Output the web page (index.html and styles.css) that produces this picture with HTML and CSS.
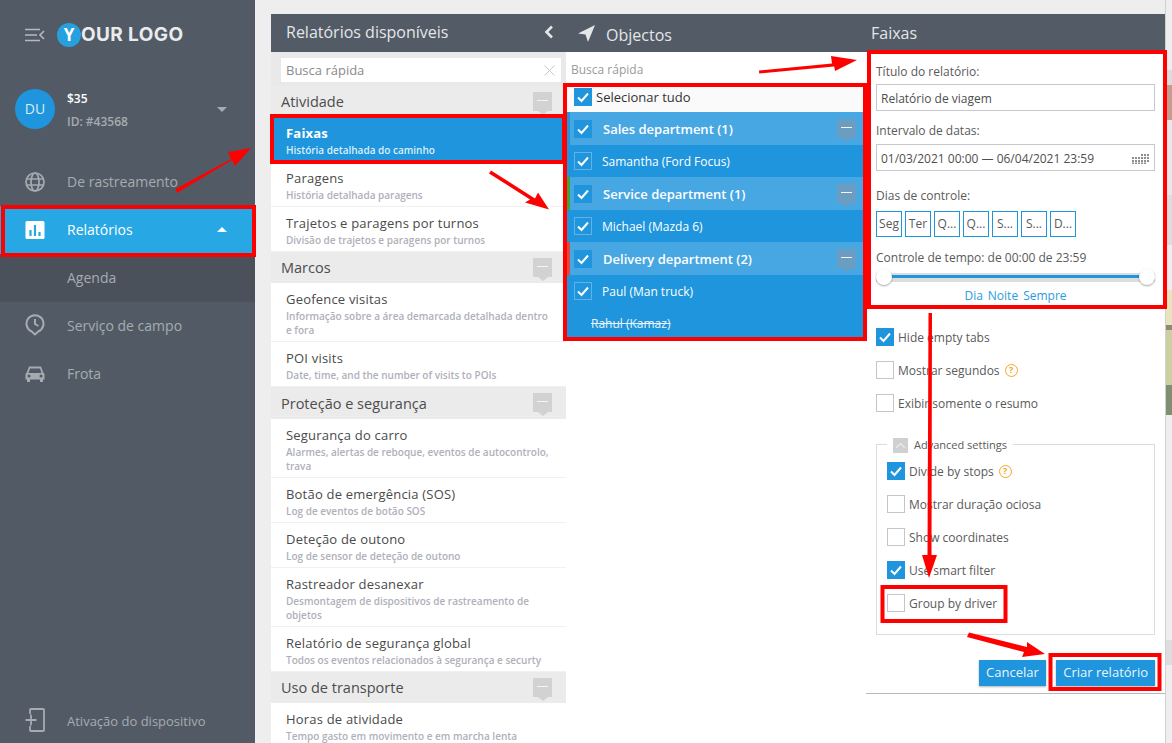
FILE: index.html
```html
<!DOCTYPE html>
<html lang="pt">
<head>
<meta charset="utf-8">
<title>Relatórios</title>
<link rel="stylesheet" href="styles.css">
</head>
<body>
<svg class="defs" width="0" height="0" aria-hidden="true">
  <defs>
    <symbol id="tick" viewBox="0 0 18 18"><path d="M4 9.500l3.500 3.500L14 5.500" fill="none" stroke="#fff" stroke-width="2"/></symbol>
  </defs>
</svg>
<div class="app">
  <aside class="sidebar">
    <div class="brand">
      <svg class="brand-toggle" width="20" height="14" viewBox="0 0 20 14"><path d="M0 1.500h15M0 7h12M0 12.500h15M19 3l-4 4 4 4" fill="none" stroke="#b5bac0" stroke-width="1.600"/></svg>
      <div class="logo"><span class="logo-mark">Y</span><span class="logo-text">OUR LOGO</span></div>
    </div>
    <div class="user">
      <div class="avatar">DU</div>
      <div class="user-info">
        <div class="balance">$35</div>
        <div class="user-id">ID: #43568</div>
      </div>
      <span class="caret-down"></span>
    </div>
    <nav class="menu">
      <a class="menu-item">
        <svg class="menu-icon" viewBox="0 0 20 20"><g fill="none" stroke="#a6abb1" stroke-width="1.700"><circle cx="10" cy="10" r="9"/><ellipse cx="10" cy="10" rx="4" ry="9"/><path d="M1.500 7h17M1.500 13h17"/></g></svg>
        <span class="menu-label">De rastreamento</span>
      </a>
      <a class="menu-item is-active">
        <svg class="menu-icon" viewBox="0 0 20 20"><rect x="0.500" y="1" width="19" height="18" rx="1.500" fill="#fff"/><path d="M5.500 10v6M10 5v11M14.500 12v4" stroke="#27a8e4" stroke-width="2.200"/></svg>
        <span class="menu-label">Relatórios</span>
        <span class="caret-up"></span>
      </a>
      <a class="menu-sub">Agenda</a>
      <a class="menu-item">
        <svg class="menu-icon menu-icon-tall" viewBox="0 0 20 22"><g fill="none" stroke="#a6abb1" stroke-width="2"><path d="M10 20.500l-3.200-3A8.500 8.500 0 1 1 13.200 17.500z"/><path d="M10 5v5l3.500 2"/></g></svg>
        <span class="menu-label">Serviço de campo</span>
      </a>
      <a class="menu-item">
        <svg class="menu-icon" viewBox="0 0 20 18"><path d="M4 1.500h12l2.500 6.500a1.500 1.500 0 0 1 1 1.500v5h-1.500V17h-3v-2.500H5V17H2v-2.500H.5v-5A1.500 1.500 0 0 1 1.500 8z" fill="#a6abb1"/><path d="M5 3.500h10l1.500 4.500h-13z" fill="#525b65"/><circle cx="4" cy="11" r="1.500" fill="#525b65"/><circle cx="16" cy="11" r="1.500" fill="#525b65"/></svg>
        <span class="menu-label">Frota</span>
      </a>
    </nav>
    <a class="device-link">
      <svg class="menu-icon" viewBox="0 0 20 24"><path d="M5 6V2a1 1 0 0 1 1-1h12a1 1 0 0 1 1 1v20a1 1 0 0 1-1 1H6a1 1 0 0 1-1-1v-4M0.500 12h11M6 6.500v11" fill="none" stroke="#a6abb1" stroke-width="1.800"/></svg>
      <span>Ativação do dispositivo</span>
    </a>
  </aside>

  <main class="workspace">
    <section class="col col-reports">
      <header class="col-head head-reports">
        <h2>Relatórios disponíveis</h2>
        <svg width="10" height="14" viewBox="0 0 10 14"><path d="M8 1.500L2.500 7 8 12.500" fill="none" stroke="#e4e6e8" stroke-width="2.600"/></svg>
      </header>
      <div class="search-bar">
        <div class="search-field"><span>Busca rápida</span>
          <svg width="11" height="11" viewBox="0 0 11 11"><path d="M.5.5l10 10M10.500.5l-10 10" stroke="#c9c9c9" stroke-width="1"/></svg>
        </div>
      </div>

      <div class="section"><span>Atividade</span><i class="fold"></i></div>
      <div class="item is-selected"><b>Faixas</b><small>História detalhada do caminho</small></div>
      <div class="item"><b>Paragens</b><small>História detalhada paragens</small></div>
      <div class="item"><b>Trajetos e paragens por turnos</b><small>Divisão de trajetos e paragens por turnos</small></div>

      <div class="section"><span>Marcos</span><i class="fold"></i></div>
      <div class="item"><b>Geofence visitas</b><small>Informação sobre a área demarcada detalhada dentro e fora</small></div>
      <div class="item"><b>POI visits</b><small>Date, time, and the number of visits to POIs</small></div>

      <div class="section section-tall"><span>Proteção e segurança</span><i class="fold"></i></div>
      <div class="item"><b>Segurança do carro</b><small>Alarmes, alertas de reboque, eventos de autocontrolo, trava</small></div>
      <div class="item"><b>Botão de emergência (SOS)</b><small>Log de eventos de botão SOS</small></div>
      <div class="item"><b>Deteção de outono</b><small>Log de sensor de deteção de outono</small></div>
      <div class="item"><b>Rastreador desanexar</b><small>Desmontagem de dispositivos de rastreamento de objetos</small></div>
      <div class="item"><b>Relatório de segurança global</b><small>Todos os eventos relacionados à segurança e securty</small></div>

      <div class="section"><span>Uso de transporte</span><i class="fold"></i></div>
      <div class="item"><b>Horas de atividade</b><small>Tempo gasto em movimento e em marcha lenta</small></div>
    </section>

    <section class="col col-objects">
      <header class="col-head head-objects">
        <svg width="19" height="19" viewBox="0 0 19 19"><path d="M18 1L1 9.500l7.500 1L11 18z" fill="#e4e6e8"/></svg>
        <h2>Objectos</h2>
      </header>
      <div class="object-search">Busca rápida</div>
      <div class="tree">
        <div class="select-all"><span class="check is-on"><svg><use href="#tick"/></svg></span><span>Selecionar tudo</span></div>
        <div class="group mark-blue"><span class="check is-on"><svg><use href="#tick"/></svg></span><b>Sales department (1)</b><i class="fold fold-dark"></i></div>
        <div class="unit"><span class="check is-ghost"><svg><use href="#tick"/></svg></span><span>Samantha (Ford Focus)</span></div>
        <div class="group mark-green"><span class="check is-on"><svg><use href="#tick"/></svg></span><b>Service department (1)</b><i class="fold fold-dark"></i></div>
        <div class="unit"><span class="check is-ghost"><svg><use href="#tick"/></svg></span><span>Michael (Mazda 6)</span></div>
        <div class="group mark-red"><span class="check is-on"><svg><use href="#tick"/></svg></span><b>Delivery department (2)</b><i class="fold fold-dark"></i></div>
        <div class="unit"><span class="check is-ghost"><svg><use href="#tick"/></svg></span><span>Paul (Man truck)</span></div>
        <div class="unit unit-off"><s>Rahul (Kamaz)</s></div>
      </div>
    </section>

    <section class="col col-form">
      <header class="col-head head-form"><h2>Faixas</h2></header>
      <div class="form">
        <label class="label label-first">Título do relatório:</label>
        <div class="input">Relatório de viagem</div>
        <label class="label label-date">Intervalo de datas:</label>
        <div class="input">01/03/2021 00:00 — 06/04/2021 23:59
          <svg width="18" height="11" viewBox="0 0 18 11"><g fill="#8e8e8e"><path d="M0 4h2v2H0zM0 7h2v2H0zM0 9.500h2v1.500H0zM3 4h2v2H3zM3 7h2v2H3zM3 9.500h2v1.500H3zM6 4h2v2H6zM6 7h2v2H6zM6 9.500h2v1.500H6zM9 1h2v2H9zM9 4h2v2H9zM9 7h2v2H9zM9 9.500h2v1.500H9zM12 1h2v2h-2zM12 4h2v2h-2zM12 7h2v2h-2zM12 9.500h2v1.500h-2zM15 1h2v2h-2zM15 4h2v2h-2zM15 7h2v2h-2z"/></g></svg>
        </div>
        <label class="label label-days">Dias de controle:</label>
        <div class="days">
          <span class="day">Seg</span><span class="day">Ter</span><span class="day">Q...</span><span class="day">Q...</span><span class="day">S...</span><span class="day">S...</span><span class="day">D...</span>
        </div>
        <label class="label label-time">Controle de tempo: de 00:00 de 23:59</label>
        <div class="slider"><span class="knob"></span><span class="knob"></span></div>
        <div class="presets"><a>Dia</a><a>Noite</a><a>Sempre</a></div>

        <div class="options">
          <div class="option"><span class="check is-on"><svg><use href="#tick"/></svg></span><span>Hide empty tabs</span></div>
          <div class="option"><span class="check"></span><span>Mostrar segundos</span><i class="help">?</i></div>
          <div class="option"><span class="check"></span><span>Exibir somente o resumo</span></div>
        </div>

        <div class="advanced">
          <div class="legend">
            <span class="legend-toggle"><svg width="11" height="7" viewBox="0 0 11 7"><path d="M1 6l4.500-4.500L10 6" fill="none" stroke="#e8e8e8" stroke-width="1.500"/></svg></span>
            <span class="legend-text">Advanced settings</span>
          </div>
          <div class="option"><span class="check is-on"><svg><use href="#tick"/></svg></span><span>Divide by stops</span><i class="help">?</i></div>
          <div class="option"><span class="check"></span><span>Mostrar duração ociosa</span></div>
          <div class="option"><span class="check"></span><span>Show coordinates</span></div>
          <div class="option"><span class="check is-on"><svg><use href="#tick"/></svg></span><span>Use smart filter</span></div>
          <div class="option"><span class="check"></span><span>Group by driver</span></div>
        </div>

        <div class="actions">
          <button class="btn btn-cancel">Cancelar</button>
          <button class="btn">Criar relatório</button>
        </div>
      </div>
      <div class="form-rule"></div>
    </section>
    <div class="map-strip"></div>
  </main>
</div>

<svg class="annotations" width="1172" height="743" viewBox="0 0 1172 743" aria-hidden="true">
  <g fill="none" stroke="#f00" stroke-width="4">
    <rect x="3" y="207" width="251" height="48"/>
    <rect x="272" y="116" width="292" height="46"/>
    <rect x="565" y="85" width="300" height="254"/>
    <rect x="869" y="52" width="296" height="255"/>
    <rect x="882.500" y="587" width="123" height="34"/>
    <rect x="1050.500" y="655" width="109" height="34"/>
  </g>
  <g fill="#f00">
    <path d="M175.500 189l55.500-30-3-7 23-4-16 18-3-6-55 33z"/>
    <path d="M491 170.500l44 28 3-6 11 17-24-7 5-3-41-26z"/>
    <path d="M759 70.500l73-7-1-7.500 26 4-22 11-.8-4.500-75 7z"/>
    <path d="M928.500 313h3.500l-.5 242 5.500 0-8 23-7-23 5.500 0z"/>
    <path d="M969 632.500l58 14.500 0-5 18 12-23 3 2-5-57-15z"/>
  </g>
</svg>
</body>
</html>
```
FILE: styles.css
```css
* { box-sizing: border-box; }
html, body { margin: 0; height: 100%; }
body {
  position: relative;
  width: 1172px;
  height: 743px;
  overflow: hidden;
  font-family: "Open Sans", "Noto Sans", "Liberation Sans", sans-serif;
  background: #eeeeee;
  color: #4a4a4a;
}
.defs { position: absolute; }
.annotations { position: absolute; left: 0; top: 0; pointer-events: none; }
.app { display: flex; height: 743px; }

/* Sidebar */
.sidebar {
  width: 255px;
  flex: none;
  display: flex;
  flex-direction: column;
  background: #525b65;
  color: #a6abb1;
  font-size: 14px;
}
.brand { display: flex; align-items: center; height: 69px; padding-left: 25px; }
.brand-toggle { margin-right: 12px; }
.logo { display: flex; align-items: center; }
.logo-mark {
  width: 24px; height: 24px; border-radius: 50%;
  background: #27a0df; color: #fff;
  font: 700 17px/24px "Open Sans", sans-serif;
  text-align: center;
}
.logo-text { font: 700 19px/24px Inter, sans-serif; color: #e9ebec; letter-spacing: 0.400px; }
.user { display: flex; align-items: center; height: 79px; padding: 1px 28px 0 15px; }
.avatar {
  width: 40px; height: 40px; border-radius: 50%;
  background: #1e95dc; color: #dcebf5;
  font-size: 14px; line-height: 40px; text-align: center;
  margin-right: 12px;
}
.user-info { flex: 1; font-size: 12px; padding-top: 3px; }
.balance { color: #fff; font-weight: 600; line-height: 18px; margin-bottom: 5px; }
.user-id { line-height: 18px; font-weight: 600; color: #a6abb1; }
.caret-down { width: 0; height: 0; border: 5px solid transparent; border-top: 5px solid #a6abb1; border-bottom: 0; }
.menu { margin-top: 10px; }
.menu-item, .device-link {
  display: flex; align-items: center;
  height: 48px; padding-left: 25px;
}
.menu-label { margin-bottom: 2px; }
.menu-icon { width: 20px; height: 20px; margin-right: 22px; flex: none; }
.menu-icon-tall { height: 22px; margin-top: -2px; }
.menu-item.is-active { background: #27a8e4; color: #fff; font-weight: 500; }
.caret-up {
  margin-left: auto; margin-right: 28px; margin-bottom: 2px;
  width: 0; height: 0;
  border: 5px solid transparent; border-bottom: 5px solid #fff; border-top: 0;
}
.menu-sub { display: block; height: 48px; line-height: 48px; padding-left: 67px; background: #4a515b; }
.device-link { margin-top: auto; height: 44px; font-size: 13px; }
.device-link .menu-icon { height: 24px; margin-top: -2px; }

/* Workspace */
.workspace { flex: 1; display: flex; padding: 14px 0 0 16px; min-width: 0; }
.col { background: #fff; overflow: hidden; flex: none; }
.col-reports { width: 295px; }
.col-objects { width: 300px; }
.col-form { width: 299px; position: relative; }
.map-strip {
  flex: 1;
  margin-top: -14px;
  border-left: 1px solid #d0d0d0;
  background: linear-gradient(#eeeeee 0 70px, #dcdcdc 70px 85px, #c49c8e 85px 120px, #e8e8e8 120px 195px, #dddddd 195px 245px, #eeeeee 245px 290px, #e8e4c0 290px 325px, #8f8a70 325px 330px, #ccd0a0 330px 385px, #7f8f70 385px 415px, #eeeeee 415px 640px, #dddddd 640px 665px, #eeeeee 665px);
}
.col-head {
  display: flex; align-items: center;
  height: 38px;
  background: #525b66;
  color: #e4e6e8;
}
.col-head h2 { margin: 0; font-size: 16px; font-weight: 400; line-height: 38px; }
.head-reports { padding: 0 12px 2px 15px; justify-content: space-between; }
.head-objects { padding-left: 11px; }
.head-objects h2 { margin: 4px 0 0 10px; }
.head-form { padding: 0 0 1px 5px; }

/* Reports list */
.search-bar { height: 34px; padding: 6px 5px 4px 10px; background: #e9e9e9; }
.search-field {
  display: flex; align-items: center; justify-content: space-between;
  height: 24px; padding: 0 6px 0 5px;
  background: #fff; color: #8a8a8a; font-size: 13px;
}
.section {
  display: flex; align-items: center; justify-content: space-between;
  height: 31px; padding: 0 14px 0 10px;
  background: #ebebeb; color: #4d4d4d;
  font-size: 14.500px;
}
.section-tall { height: 32px; }
.fold {
  position: relative; display: block; width: 19px; height: 19px;
  background: #d2d2d2;
  margin-top: -1px;
}
.fold::before { content: ""; position: absolute; left: 4px; right: 4px; top: 8px; height: 1px; background: #f4f4f4; }
.fold::after {
  content: ""; position: absolute; left: 5px; top: 19px; width: 0; height: 0;
  border: 5px solid transparent; border-top: 4px solid #d2d2d2; border-bottom: 0;
}
.fold-dark { background: #6b9dc3; }
.fold-dark::after { border-top-color: #6b9dc3; }
.item {
  padding: 7px 10px 4px 15px;
  border-bottom: 1px solid #f0f0f0;
  background: #fff;
}
.item b { display: block; font-size: 13px; font-weight: 400; line-height: 18px; letter-spacing: 0.200px; color: #4a4a4a; margin-bottom: 1px; }
.item small { display: block; font-size: 10px; font-weight: 600; line-height: 14px; color: #b0b0ba; }
.item.is-selected { background: #1e95dc; border-bottom-color: #1e95dc; }
.item.is-selected b { color: #fff; font-weight: 700; }
.item.is-selected small { color: #dceefa; }

/* Objects tree */
.object-search { height: 35px; padding-left: 5px; line-height: 35px; font-size: 12px; color: #9a9a9a; }
.check {
  display: block; flex: none; width: 18px; height: 18px;
  border: 1px solid #c4c4cc; background: #fff;
}
.check svg { display: block; width: 18px; height: 18px; margin: -1px; }
.check.is-on { background: #1e95dc; border-color: #1e95dc; }
.check.is-ghost { background: transparent; border-color: #5fb3e6; }
.tree { margin: 0 3px 0 1px; font-size: 12px; color: #fff; }
.select-all {
  display: flex; align-items: center; gap: 4px;
  height: 25px; padding: 0 0 5px 7px; background: #fafafa; color: #333;
  font-size: 13px;
}
.group {
  display: flex; align-items: center;
  height: 33px; padding: 0 7px;
  background: #47a7e3;
  border-left: 3px solid #1e95dc;
  font-size: 13px;
}
.group .check { margin-left: -3px; }
.group b { flex: 1; margin-left: 11px; font-weight: 600; }
.mark-green { border-left-color: #3fa535; }
.mark-red { border-left-color: #e0483e; }
.unit {
  display: flex; align-items: center; gap: 10px;
  height: 32px; padding-left: 7px;
  background: #1e95dc;
}
.unit-off { color: #eaf4fb; padding-left: 24px; }

/* Form */
.form { padding: 0 10px; height: 641px; font-size: 12px; color: #5a5a5a; }
.label { display: block; line-height: 18px; }
.label-first { padding-top: 11px; height: 32px; }
.label-date { margin-top: 11px; margin-bottom: 4px; }
.label-days { margin-top: 16px; margin-bottom: 6px; }
.label-time { margin-top: 12px; margin-bottom: 2px; }
.input {
  display: flex; align-items: center; justify-content: space-between;
  height: 27px; padding: 1px 4px 0;
  border: 1px solid #c8c8d0;
  font-size: 12px; color: #4f4f4f;
}
.days { display: flex; gap: 3px; }
.day {
  width: 26px; height: 26px; border: 1px solid #1e95dc;
  line-height: 24px; text-align: center; font-size: 12px; color: #5a5a5a;
}
.slider {
  position: relative;
  display: flex; justify-content: space-between; align-items: center;
  height: 16px;
  background: linear-gradient(#dddddd 0 0) center / 100% 9px no-repeat;
}
.slider::before { content: ""; position: absolute; left: 8px; right: 8px; top: 6px; height: 3px; background: #1e95dc; }
.knob {
  position: relative; width: 16px; height: 16px; border-radius: 50%;
  background: #fff; box-shadow: 0 1px 2px rgba(0, 0, 0, .35);
}
.presets {
  display: flex; justify-content: center; gap: 5px;
  margin-top: 2px; line-height: 18px; color: #2b9be0;
}
.options { margin-top: 15px; }
.option { display: flex; align-items: center; gap: 4px; height: 33px; padding-top: 1px; }
.help {
  display: block; width: 13px; height: 13px; margin-left: 1px;
  border: 1.500px solid #f5a623; border-radius: 50%;
  font: 700 9px/10px "Open Sans", sans-serif; text-align: center; color: #f5a623;
}
.advanced {
  position: relative;
  height: 191px;
  margin-top: 25px;
  padding: 9px 0 0 10px;
  border: 1px solid #dcdcdc;
}
.legend {
  position: absolute; left: 10px; top: -7px;
  display: flex; align-items: center; gap: 6px;
  height: 15px; padding: 0 6px;
  background: #fff; font-size: 11px;
}
.legend-text { margin-top: -3px; }
.legend-toggle {
  display: flex; align-items: center; justify-content: center;
  width: 15px; height: 15px; background: #d0d0d0;
}
.actions { display: flex; justify-content: flex-end; gap: 10px; margin-top: 25px; }
.btn {
  height: 26px; padding: 0 7px 2px; border: 0;
  background: #1e95dc; color: #e9f4fb;
  font: 400 13px/24px "Open Sans", sans-serif;
  box-shadow: 0 1px 2px rgba(0, 0, 0, .3);
}
.btn-cancel { padding: 0 7.500px 2px; }
.form-rule { height: 1px; background: #b8b8c2; }
```
